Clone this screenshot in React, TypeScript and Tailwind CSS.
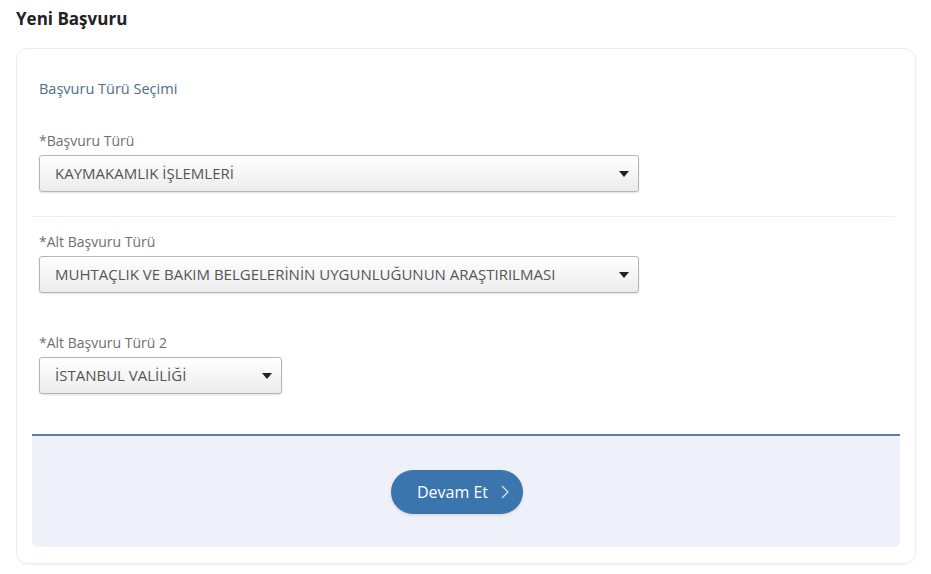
import React from "react";

const Caret = () => (
	<svg width="10" height="6" viewBox="0 0 10 6" className="shrink-0">
		<path d="M0 0 H10 L5 6 Z" fill="#222" />
	</svg>
);

const Dropdown = ({ value, width }: { value: string; width: string }) => (
	<div
		className={`${width} flex h-[37px] items-center justify-between rounded-[3px] border border-[#b5b5b5] bg-gradient-to-b from-white to-[#ececec] pl-[15px] pr-[9px] shadow-[0_1px_2px_rgba(0,0,0,0.12)]`}
	>
		<span className="text-[15px] text-[#555]">{value}</span>
		<Caret />
	</div>
);

const Field = ({ label, children }: { label: string; children: React.ReactNode }) => (
	<div className="flex flex-col">
		<label className="mb-[6px] text-[14px] leading-4 text-[#6f6f6f]">{label}</label>
		{children}
	</div>
);

export default function App() {
	return (
		<div
			className="h-[574px] w-[931px] bg-white px-4 pt-[9px]"
			style={{ fontFamily: '"Open Sans", "Liberation Sans", sans-serif' }}
		>
			<h1 className="h-[20px] text-[17px] font-bold leading-5 text-[#222]">Yeni Başvuru</h1>
			<div className="mt-[19px] w-[900px] rounded-[12px] border border-[#ececec] px-[15px] pb-[16px] pt-[30px] shadow-[0_1px_2px_rgba(0,0,0,0.05)]">
				<div className="px-[7px]">
					<h2 className="text-[14.5px] leading-5 text-[#4b6f86]">Başvuru Türü Seçimi</h2>
					<div className="mt-[34px]">
						<Field label="*Başvuru Türü">
							<Dropdown value="KAYMAKAMLIK İŞLEMLERİ" width="w-[600px]" />
						</Field>
					</div>
				</div>
				<div className="mr-[5px] mt-[24px] h-px bg-[#efefef]" />
				<div className="px-[7px]">
					<div className="mt-[17px]">
						<Field label="*Alt Başvuru Türü">
							<Dropdown
								value="MUHTAÇLIK VE BAKIM BELGELERİNİN UYGUNLUĞUNUN ARAŞTIRILMASI"
								width="w-[600px]"
							/>
						</Field>
					</div>
					<div className="mt-[42px]">
						<Field label="*Alt Başvuru Türü 2">
							<Dropdown value="İSTANBUL VALİLİĞİ" width="w-[243px]" />
						</Field>
					</div>
				</div>
				<div className="mt-[40px] h-[2px] bg-[#5b7fa4]" />
				<div className="flex h-[111px] items-center justify-center rounded-b-[6px] bg-[#eef1f9] pr-[18px]">
					<button className="flex h-[44px] w-[132px] items-center justify-center gap-[13px] rounded-full bg-[#3a75ad] pl-[12px] text-[16px] text-white shadow-[0_1px_3px_rgba(0,0,0,0.15)]">
						<span>Devam Et</span>
						<svg width="8" height="14" viewBox="0 0 8 14">
							<path d="M1 1 L7 7 L1 13" fill="none" stroke="#d9e6f3" strokeWidth="1.2" />
						</svg>
					</button>
				</div>
			</div>
		</div>
	);
}
